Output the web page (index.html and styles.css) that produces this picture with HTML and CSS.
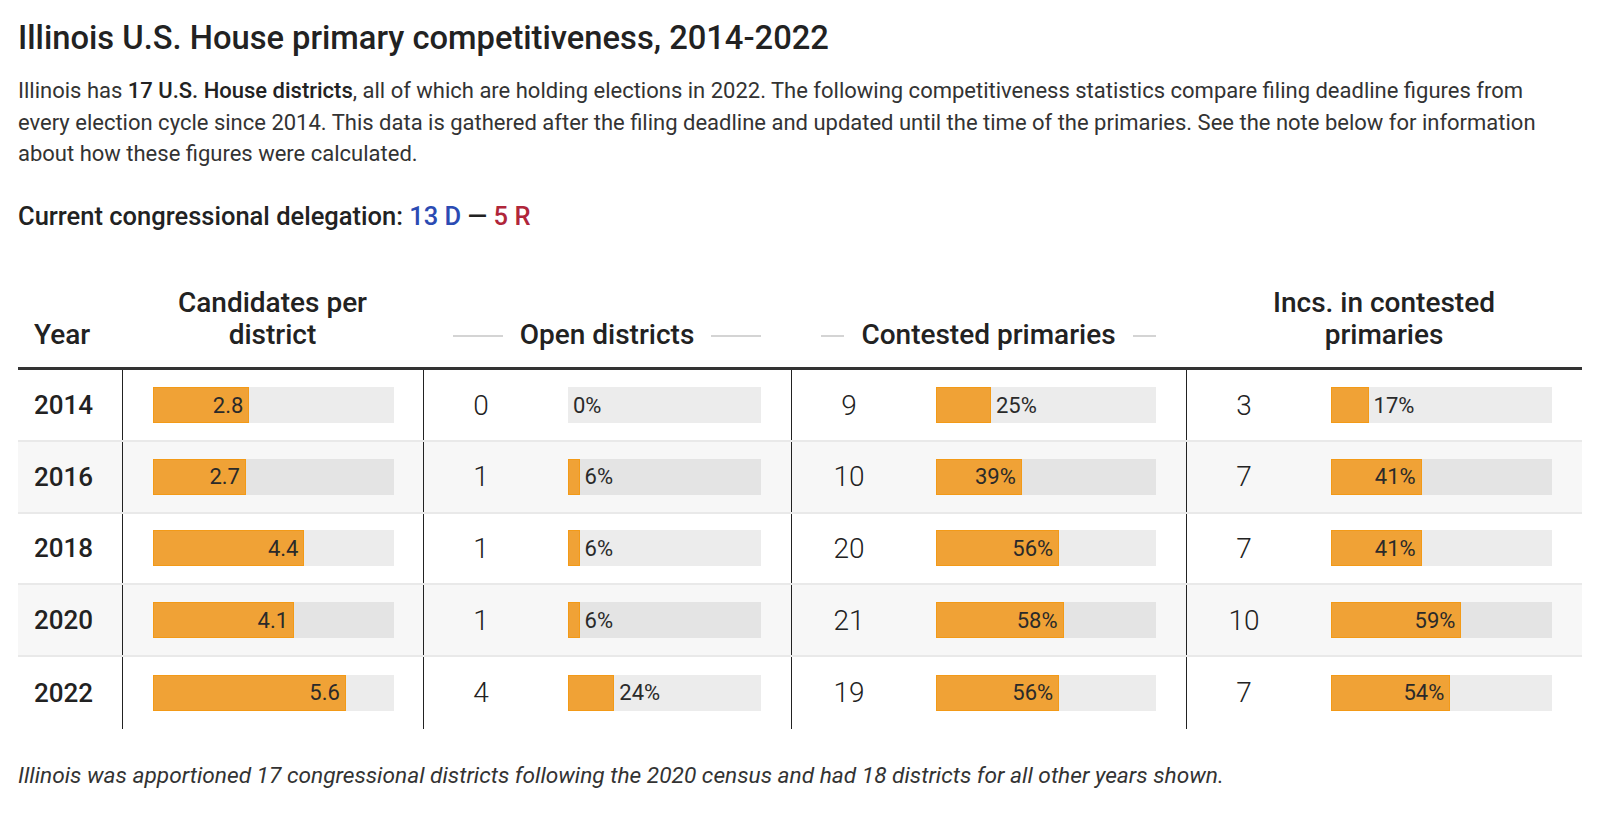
FILE: index.html
```html
<!DOCTYPE html>
<html lang="en">
<head>
<meta charset="utf-8">
<title>Illinois U.S. House primary competitiveness, 2014-2022</title>
<link rel="stylesheet" href="styles.css">
</head>
<body>
<main class="page">
  <h1 class="title">Illinois U.S. House primary competitiveness, 2014-2022</h1>
  <p class="intro">Illinois has <strong>17 U.S. House districts</strong>, all of which are holding elections in 2022. The following competitiveness statistics compare filing deadline figures from every election cycle since 2014. This data is gathered after the filing deadline and updated until the time of the primaries. See the note below for information about how these figures were calculated.</p>
  <p class="delegation">Current congressional delegation: <span class="dem">13 D</span> — <span class="rep">5 R</span></p>

  <div class="table">
    <div class="thead">
      <div class="th th-year">Year</div>
      <div class="th th-center">Candidates per<br>district</div>
      <div class="th th-lined"><span class="rule"></span><span>Open districts</span><span class="rule"></span></div>
      <div class="th th-lined"><span class="rule"></span><span>Contested primaries</span><span class="rule"></span></div>
      <div class="th th-center">Incs. in contested<br>primaries</div>
    </div>

    <div class="tbody">
      <div class="tr">
        <div class="td year">2014</div>
        <div class="td cand"><div class="bar"><div class="fill in" style="width:40%"><span class="lbl">2.8</span></div></div></div>
        <div class="td pair"><span class="num">0</span><div class="bar"><div class="fill empty" style="width:0%"></div><span class="lbl out">0%</span></div></div>
        <div class="td pair"><span class="num">9</span><div class="bar"><div class="fill" style="width:25%"></div><span class="lbl out">25%</span></div></div>
        <div class="td pair"><span class="num">3</span><div class="bar"><div class="fill" style="width:17%"></div><span class="lbl out">17%</span></div></div>
      </div>
      <div class="tr shade">
        <div class="td year">2016</div>
        <div class="td cand"><div class="bar"><div class="fill in" style="width:38.57%"><span class="lbl">2.7</span></div></div></div>
        <div class="td pair"><span class="num">1</span><div class="bar"><div class="fill" style="width:6%"></div><span class="lbl out">6%</span></div></div>
        <div class="td pair"><span class="num">10</span><div class="bar"><div class="fill in" style="width:39%"><span class="lbl">39%</span></div></div></div>
        <div class="td pair"><span class="num">7</span><div class="bar"><div class="fill in" style="width:41%"><span class="lbl">41%</span></div></div></div>
      </div>
      <div class="tr">
        <div class="td year">2018</div>
        <div class="td cand"><div class="bar"><div class="fill in" style="width:62.86%"><span class="lbl">4.4</span></div></div></div>
        <div class="td pair"><span class="num">1</span><div class="bar"><div class="fill" style="width:6%"></div><span class="lbl out">6%</span></div></div>
        <div class="td pair"><span class="num">20</span><div class="bar"><div class="fill in" style="width:56%"><span class="lbl">56%</span></div></div></div>
        <div class="td pair"><span class="num">7</span><div class="bar"><div class="fill in" style="width:41%"><span class="lbl">41%</span></div></div></div>
      </div>
      <div class="tr shade">
        <div class="td year">2020</div>
        <div class="td cand"><div class="bar"><div class="fill in" style="width:58.57%"><span class="lbl">4.1</span></div></div></div>
        <div class="td pair"><span class="num">1</span><div class="bar"><div class="fill" style="width:6%"></div><span class="lbl out">6%</span></div></div>
        <div class="td pair"><span class="num">21</span><div class="bar"><div class="fill in" style="width:58%"><span class="lbl">58%</span></div></div></div>
        <div class="td pair"><span class="num">10</span><div class="bar"><div class="fill in" style="width:59%"><span class="lbl">59%</span></div></div></div>
      </div>
      <div class="tr last">
        <div class="td year">2022</div>
        <div class="td cand"><div class="bar"><div class="fill in" style="width:80%"><span class="lbl">5.6</span></div></div></div>
        <div class="td pair"><span class="num">4</span><div class="bar"><div class="fill" style="width:24%"></div><span class="lbl out">24%</span></div></div>
        <div class="td pair"><span class="num">19</span><div class="bar"><div class="fill in" style="width:56%"><span class="lbl">56%</span></div></div></div>
        <div class="td pair"><span class="num">7</span><div class="bar"><div class="fill in" style="width:54%"><span class="lbl">54%</span></div></div></div>
      </div>
    </div>
  </div>

  <p class="note">Illinois was apportioned 17 congressional districts following the 2020 census and had 18 districts for all other years shown.</p>
</main>
</body>
</html>
```
FILE: styles.css
```css
* { box-sizing: border-box; }

html, body {
  margin: 0;
  padding: 0;
  background: #ffffff;
}

body {
  font-family: Roboto, "Liberation Sans", Arial, sans-serif;
  color: #222222;
}

.page {
  padding: 18px 18px 0 18px;
}

.title {
  margin: 0;
  font-size: 32.7px;
  line-height: 40px;
  font-weight: 500;
  color: #222222;
}

.intro {
  margin: 17px 0 0 0;
  max-width: 1540px;
  font-size: 22px;
  line-height: 31.6px;
  font-weight: 400;
  color: #333333;
}

.intro strong {
  font-weight: 500;
  color: #222222;
}

.delegation {
  margin: 31px 0 0 0;
  font-size: 25.5px;
  line-height: 30px;
  font-weight: 500;
  color: #222222;
}

.dem { color: #2b4bb3; }
.rep { color: #b0263a; }

.table {
  margin-top: 56px;
}

.thead,
.tr {
  display: grid;
  grid-template-columns: 104px 301px 368px 395px 1fr;
}

.th {
  font-size: 28px;
  line-height: 32.7px;
  font-weight: 500;
  color: #222222;
  padding-bottom: 15px;
  align-self: end;
}

.th-year {
  padding-left: 16px;
}

.th-center {
  text-align: center;
}

.th-lined {
  display: flex;
  align-items: center;
  gap: 17px;
  padding-left: 30px;
  padding-right: 30px;
  white-space: nowrap;
}

.th-lined .rule {
  flex: 1;
  height: 2px;
  background: #d4d4d4;
  margin-top: 1px;
}

.tbody {
  border-top: 3px solid #333333;
}

.tr {
  border-bottom: 2px solid #e9e9e9;
  background: #ffffff;
}

.tr.shade {
  background: #f7f7f7;
}

.tr.last {
  border-bottom: 0;
}

.td {
  height: 69.7px;
  display: flex;
  align-items: center;
  border-left: 1px solid #222222;
}

.tr.last .td {
  height: 71.7px;
}

.td.year {
  border-left: 0;
  padding-left: 16px;
  font-size: 26px;
  font-weight: 500;
  color: #222222;
}

.td.cand {
  padding: 0 29px 0 30px;
}

.td.pair {
  padding-right: 30px;
}

.num {
  width: 114px;
  flex: none;
  text-align: center;
  font-size: 28px;
  font-weight: 300;
  color: #222222;
}

.bar {
  flex: 1;
  height: 36px;
  display: flex;
  align-items: stretch;
  background: rgba(0, 0, 0, 0.075);
}

.td.pair .bar {
  margin-left: 30px;
}

.fill {
  flex: none;
  background: #f0a236;
  border: 1px solid #f39a17;
  display: flex;
  align-items: center;
  justify-content: flex-end;
}

.fill.empty {
  border: 0;
}

.lbl {
  font-size: 22px;
  font-weight: 400;
  color: #2a2a2a;
  display: flex;
  align-items: center;
  white-space: nowrap;
}

.fill.in .lbl {
  padding-right: 5px;
}

.lbl.out {
  padding-left: 5px;
}

.note {
  margin: 33px 0 0 0;
  font-size: 22.7px;
  line-height: 28px;
  font-style: italic;
  color: #333333;
}
```
